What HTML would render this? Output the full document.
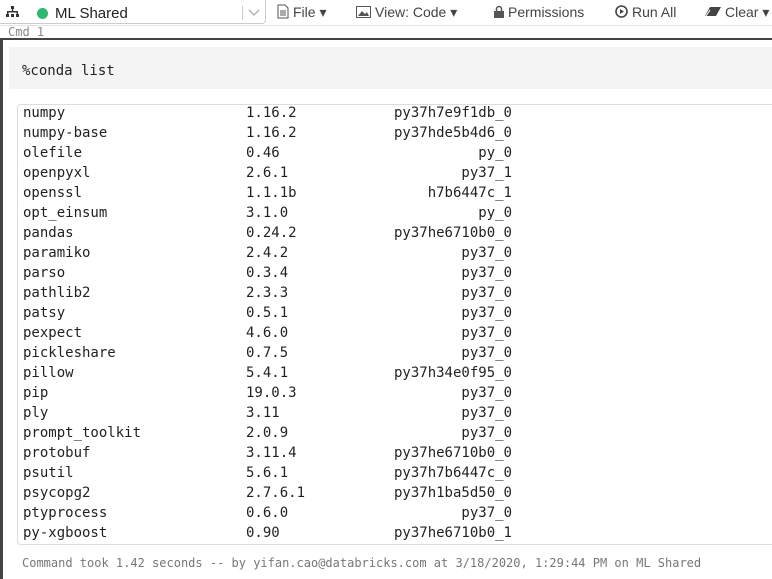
<!DOCTYPE html>
<html><head><style>
body{margin:0;width:772px;height:579px;overflow:hidden;background:#fff;font-family:"Liberation Sans",sans-serif;position:relative}
.tb{position:absolute;left:0;top:0;width:772px;height:25px;border-bottom:1px solid #e3e3e3}
.sel{position:absolute;left:-4px;top:-6px;width:268px;height:28px;border:1px solid #ccc;border-radius:4px}
.t{position:absolute;top:4px;font-size:14px;color:#444}
.cmd{position:absolute;left:8px;top:25px;font:12px "DejaVu Sans Mono",monospace;color:#888}
.cell{position:absolute;left:0;top:38px;width:772px;height:541px;border-top:2px solid #444;border-left:3px solid #444;box-sizing:border-box}
.code{position:absolute;left:9px;top:47px;width:770px;height:42px;background:#f4f4f4;font:14px "DejaVu Sans Mono",monospace;color:#222}
.out{position:absolute;left:17px;top:104px;width:770px;height:441px;border:1px solid #ddd;border-radius:4px;overflow:hidden;box-sizing:border-box}
.rows{position:absolute;left:5px;top:-2px;font:14px "DejaVu Sans Mono",monospace;color:#222}
.r{height:20px;line-height:20px;position:relative;width:500px}
.r span{position:absolute;top:0}
.v{left:223px}.b{right:11px}
.foot{position:absolute;left:22px;top:556px;font:12px "DejaVu Sans Mono",monospace;color:#777}
</style></head><body>
<div class="tb">
<div class="sel"></div>
<svg style="position:absolute;left:6px;top:6px" width="13" height="12" viewBox="0 0 13 12"><rect x="5" y="0" width="3" height="3" fill="#333"/><rect x="1" y="5" width="11" height="1.5" fill="#333"/><rect x="5.8" y="3" width="1.4" height="3" fill="#333"/><rect x="1" y="5" width="1.4" height="4" fill="#333"/><rect x="10.6" y="5" width="1.4" height="4" fill="#333"/><rect x="0" y="8" width="3" height="3" fill="#333"/><rect x="5" y="8" width="3" height="3" fill="#333"/><rect x="10" y="8" width="3" height="3" fill="#333"/></svg>
<div style="position:absolute;left:37px;top:8px;width:11px;height:11px;border-radius:50%;background:#2fb872"></div>
<div class="t" style="left:55px;top:5px;font-size:15px;color:#222">ML Shared</div>
<div style="position:absolute;left:242px;top:6px;width:1px;height:14px;background:#ccc"></div>
<svg style="position:absolute;left:248px;top:9px" width="12" height="8"><path d="M1 1 L6 6 L11 1" stroke="#aaa" fill="none" stroke-width="1.3"/></svg>
<svg style="position:absolute;left:277px;top:4px" width="12" height="15"><path d="M1 1h7l3 3v10H1z" fill="none" stroke="#555"/><path d="M3 7h6M3 9h6M3 11h6" stroke="#555"/></svg>
<div class="t" style="left:293px">File ▾</div>
<svg style="position:absolute;left:356px;top:6px" width="15" height="12"><rect x="0.5" y="0.5" width="14" height="11" fill="none" stroke="#555"/><path d="M2 10l4-5 3 3 2-2 2 4z" fill="#555"/></svg>
<div class="t" style="left:375px">View: Code ▾</div>
<svg style="position:absolute;left:494px;top:5px" width="10" height="13"><path d="M2.5 6V4a2.5 2.5 0 0 1 5 0v2" fill="none" stroke="#555" stroke-width="1.5"/><rect x="0" y="6" width="10" height="7" fill="#555"/></svg>
<div class="t" style="left:508px">Permissions</div>
<svg style="position:absolute;left:615px;top:5px" width="13" height="13"><circle cx="6.5" cy="6.5" r="5.5" fill="none" stroke="#444" stroke-width="1.6"/><path d="M5 4l4 2.5L5 9z" fill="#444"/></svg>
<div class="t" style="left:632px">Run All</div>
<svg style="position:absolute;left:705px;top:6px" width="17" height="11"><path d="M5 1h11L11 10H0z" fill="#444"/><path d="M1 10l4-6" stroke="#fff" stroke-width="1"/></svg>
<div class="t" style="left:725px">Clear ▾</div>
</div>
<div class="cmd">Cmd 1</div>
<div class="cell"></div>
<div class="code"><div style="position:absolute;left:13px;top:16px">%conda list</div></div>
<div class="out"><div class="rows">
<div class="r"><span>numpy</span><span class="v">1.16.2</span><span class="b">py37h7e9f1db_0</span></div>
<div class="r"><span>numpy-base</span><span class="v">1.16.2</span><span class="b">py37hde5b4d6_0</span></div>
<div class="r"><span>olefile</span><span class="v">0.46</span><span class="b">py_0</span></div>
<div class="r"><span>openpyxl</span><span class="v">2.6.1</span><span class="b">py37_1</span></div>
<div class="r"><span>openssl</span><span class="v">1.1.1b</span><span class="b">h7b6447c_1</span></div>
<div class="r"><span>opt_einsum</span><span class="v">3.1.0</span><span class="b">py_0</span></div>
<div class="r"><span>pandas</span><span class="v">0.24.2</span><span class="b">py37he6710b0_0</span></div>
<div class="r"><span>paramiko</span><span class="v">2.4.2</span><span class="b">py37_0</span></div>
<div class="r"><span>parso</span><span class="v">0.3.4</span><span class="b">py37_0</span></div>
<div class="r"><span>pathlib2</span><span class="v">2.3.3</span><span class="b">py37_0</span></div>
<div class="r"><span>patsy</span><span class="v">0.5.1</span><span class="b">py37_0</span></div>
<div class="r"><span>pexpect</span><span class="v">4.6.0</span><span class="b">py37_0</span></div>
<div class="r"><span>pickleshare</span><span class="v">0.7.5</span><span class="b">py37_0</span></div>
<div class="r"><span>pillow</span><span class="v">5.4.1</span><span class="b">py37h34e0f95_0</span></div>
<div class="r"><span>pip</span><span class="v">19.0.3</span><span class="b">py37_0</span></div>
<div class="r"><span>ply</span><span class="v">3.11</span><span class="b">py37_0</span></div>
<div class="r"><span>prompt_toolkit</span><span class="v">2.0.9</span><span class="b">py37_0</span></div>
<div class="r"><span>protobuf</span><span class="v">3.11.4</span><span class="b">py37he6710b0_0</span></div>
<div class="r"><span>psutil</span><span class="v">5.6.1</span><span class="b">py37h7b6447c_0</span></div>
<div class="r"><span>psycopg2</span><span class="v">2.7.6.1</span><span class="b">py37h1ba5d50_0</span></div>
<div class="r"><span>ptyprocess</span><span class="v">0.6.0</span><span class="b">py37_0</span></div>
<div class="r"><span>py-xgboost</span><span class="v">0.90</span><span class="b">py37he6710b0_1</span></div>
</div></div>
<div class="foot">Command took 1.42 seconds -- by yifan.cao@databricks.com at 3/18/2020, 1:29:44 PM on ML Shared</div>
</body></html>
